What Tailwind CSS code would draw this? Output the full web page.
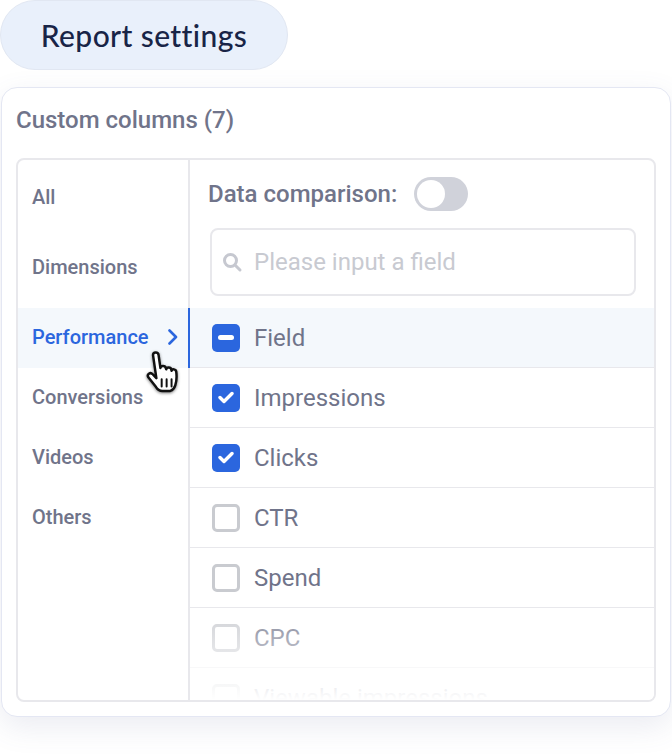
<!DOCTYPE html>
<html lang="en">
<head>
    <meta charset="UTF-8">
    <title>Report settings</title>
    <script src="https://cdn.jsdelivr.net/npm/@tailwindcss/browser@4"></script>
</head>
<body class="bg-white w-[672px] h-[754px] overflow-hidden font-['Roboto',sans-serif]">
    <!-- Header pill -->
    <div class="w-[288px] h-[70px] rounded-[35px] bg-[#e9f0fb] border border-[#e1e7f2] flex items-center justify-center">
        <span class="font-['Lato',sans-serif] text-[30px] font-medium text-[#182447] tracking-[0.4px]">Report settings</span>
    </div>

    <!-- Card -->
    <div class="mt-[17px] mx-px w-[670px] h-[630px] rounded-[16px] bg-white border border-[#e4e7f3] shadow-[0_10px_30px_rgba(90,100,150,0.12)] px-[14px] pt-[15px]">
        <div class="text-[24px] leading-[34px] font-medium text-[#70748a] h-[55px]">Custom columns (7)</div>

        <div class="relative flex h-[544px] w-[640px] rounded-[8px] border-2 border-[#e8e8ec] overflow-hidden">
            <!-- Categories -->
            <div class="w-[170px] shrink-0 flex flex-col pt-[2px] text-[20px] font-medium text-[#70748a]">
                <div class="h-[70px] flex items-center pl-[14px]">All</div>
                <div class="h-[70px] flex items-center pl-[14px]">Dimensions</div>
                <div class="h-[60px] mt-[6px] pb-[2px] flex items-center justify-between pl-[14px] pr-[9px] bg-[#f4f8fc] text-[#2b66de]">
                    <span>Performance</span>
                    <svg width="12" height="16" viewBox="0 0 12 16" fill="none" stroke="#2b66de" stroke-width="2.600" stroke-linecap="round" stroke-linejoin="round"><path d="M2.5 1.5 9 8l-6.500 6.500"/></svg>
                </div>
                <div class="h-[60px] pb-[2px] flex items-center pl-[14px]">Conversions</div>
                <div class="h-[60px] pb-[2px] flex items-center pl-[14px]">Videos</div>
                <div class="h-[60px] pb-[2px] flex items-center pl-[14px]">Others</div>
            </div>

            <!-- Fields -->
            <div class="flex-1 border-l-2 border-[#e8e8ec] relative">
                <div class="h-[68px] flex items-center gap-[17px] pl-[18px]">
                    <span class="text-[24px] font-medium text-[#70748a]">Data comparison:</span>
                    <span class="w-[54px] h-[34px] rounded-full bg-[#d0d2da] flex items-center pl-[3px]">
                        <span class="w-[28px] h-[28px] rounded-full bg-white"></span>
                    </span>
                </div>
                <div class="ml-[20px] w-[426px] h-[68px] rounded-[8px] border-2 border-[#e8e8ec] flex items-center pl-[9px] gap-[11px]">
                    <svg width="22" height="22" viewBox="0 0 22 22" fill="none" stroke="#c6c8d0" stroke-width="3" stroke-linecap="round"><circle cx="9.500" cy="9.500" r="6"/><path d="m14.500 14.500 4.500 4.500"/></svg>
                    <span class="text-[24px] text-[#c8cad1]">Please input a field</span>
                </div>

                <div class="mt-[12px] relative">
                    <div class="absolute -left-[2px] top-0 h-[60px] w-[2px] bg-[#2b66de]"></div>
                    <div class="h-[60px] flex items-center pl-[22px] gap-[14px] bg-[#f4f8fc] border-b border-[#e8e8ec] text-[24px] text-[#70748a]">
                        <span class="w-[28px] h-[28px] rounded-[5px] bg-[#2b66de] flex items-center justify-center">
                            <span class="w-[16px] h-[5px] rounded-full bg-white"></span>
                        </span>
                        Field
                    </div>
                    <div class="h-[60px] flex items-center pl-[22px] gap-[14px] border-b border-[#e8e8ec] text-[24px] text-[#70748a]">
                        <span class="w-[28px] h-[28px] rounded-[5px] bg-[#2b66de] flex items-center justify-center">
                            <svg width="16" height="13" viewBox="0 0 16 13" fill="none" stroke="#fff" stroke-width="3.400" stroke-linecap="round" stroke-linejoin="round"><path d="m2 6.500 4 4 8-8"/></svg>
                        </span>
                        Impressions
                    </div>
                    <div class="h-[60px] flex items-center pl-[22px] gap-[14px] border-b border-[#e8e8ec] text-[24px] text-[#70748a]">
                        <span class="w-[28px] h-[28px] rounded-[5px] bg-[#2b66de] flex items-center justify-center">
                            <svg width="16" height="13" viewBox="0 0 16 13" fill="none" stroke="#fff" stroke-width="3.400" stroke-linecap="round" stroke-linejoin="round"><path d="m2 6.500 4 4 8-8"/></svg>
                        </span>
                        Clicks
                    </div>
                    <div class="h-[60px] flex items-center pl-[22px] gap-[14px] border-b border-[#e8e8ec] text-[24px] text-[#70748a]">
                        <span class="w-[28px] h-[28px] rounded-[5px] border-[3px] border-[#c9cbd0]"></span>
                        CTR
                    </div>
                    <div class="h-[60px] flex items-center pl-[22px] gap-[14px] border-b border-[#e8e8ec] text-[24px] text-[#70748a]">
                        <span class="w-[28px] h-[28px] rounded-[5px] border-[3px] border-[#c9cbd0]"></span>
                        Spend
                    </div>
                    <div class="h-[60px] flex items-center pl-[22px] gap-[14px] border-b border-[#e8e8ec] text-[24px] text-[#70748a]">
                        <span class="w-[28px] h-[28px] rounded-[5px] border-[3px] border-[#c9cbd0]"></span>
                        CPC
                    </div>
                    <div class="h-[60px] flex items-center pl-[22px] gap-[14px] text-[24px] text-[#70748a]">
                        <span class="w-[28px] h-[28px] rounded-[5px] border-[3px] border-[#c9cbd0]"></span>
                        Viewable impressions
                    </div>
                </div>

                <!-- fade over the last rows -->
                <div class="absolute left-0 right-0 bottom-0 h-[92px] bg-gradient-to-b from-white/10 to-white"></div>
            </div>

            <!-- Cursor -->
            <svg class="absolute left-[127px] top-[189px]" width="42" height="48" viewBox="0 0 34 38" fill="#fff" stroke="#111" stroke-width="2" stroke-linejoin="round" stroke-linecap="round" style="filter: drop-shadow(0 1px 1.500px rgba(0,0,0,.5))">
                <path d="M6.500 4.500c0-2.800 4.200-2.800 4.500 0l1.500 10.500c.1-2.200 3.900-2.300 4.300 0l.4 1c.2-2 3.700-2 4.100.2l.2 1c.4-1.800 3.500-1.500 3.800.8.500 4 .2 8-.8 11-.8 2.600-2.500 4-4 4.500H14c-2.500 0-4-1.300-5.200-3.300L2.700 22.500c-1.500-2.500 1.600-4.500 3.500-2.500l3 3.200z"/>
                <path d="M13.500 24v6M17.500 24v6M21.500 24v6" fill="none" stroke-width="1.600"/>
            </svg>
        </div>
    </div>
</body>
</html>
